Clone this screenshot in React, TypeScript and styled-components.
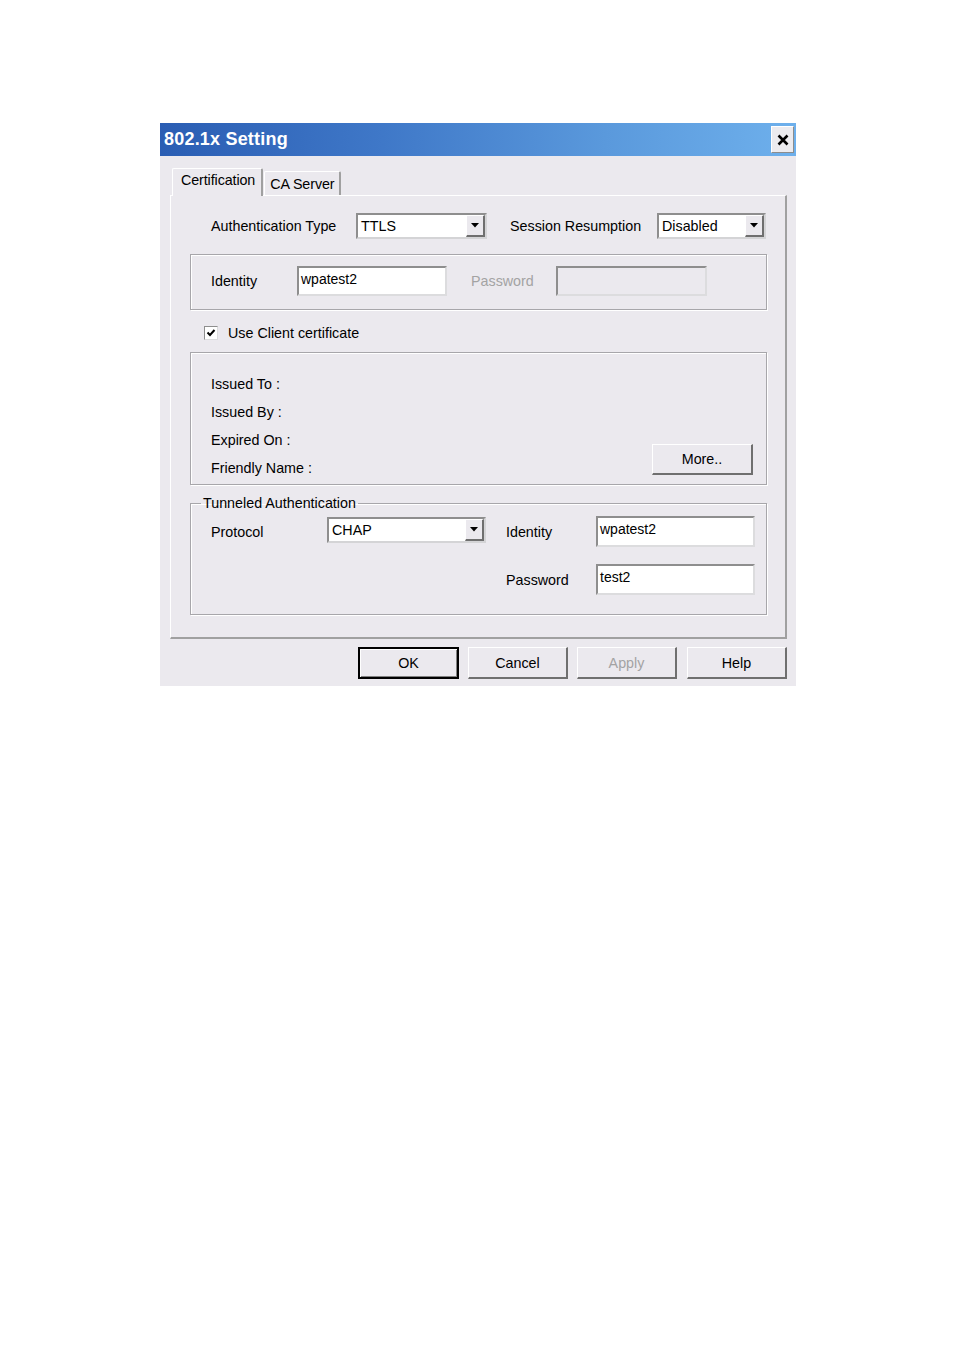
import React from 'react'
import styled, { createGlobalStyle } from 'styled-components'

const GlobalStyle = createGlobalStyle`
  body {
    margin: 0;
    background: #ffffff;
  }
`

const face = '#ebe9ee'
const shadow = '#a0a0a0'
const darkShadow = '#6f6f6f'

export default function App() {
  return (
    <Page>
      <GlobalStyle />
      <Dialog>
        <TitleBar>
          <Title>802.1x Setting</Title>
          <CloseButton>
            <svg width="12" height="12" viewBox="0 0 12 12">
              <path d="M1.5 1.5 L10.5 10.5 M10.5 1.5 L1.5 10.5" stroke="#000" strokeWidth="2.6" />
            </svg>
          </CloseButton>
        </TitleBar>

        <Body>
          <Tabs>
            <Tab $active>Certification</Tab>
            <Tab>CA Server</Tab>
          </Tabs>

          <Panel>
            <TopRow>
              <Label $width={145}>Authentication Type</Label>
              <Select $width={131} value="TTLS" />
              <Label $width={147} style={{ marginLeft: 23 }}>Session Resumption</Label>
              <Select $width={109} value="Disabled" />
            </TopRow>

            <IdentityGroup>
              <Label $width={86}>Identity</Label>
              <Field $width={150}>wpatest2</Field>
              <Label $width={85} $disabled style={{ marginLeft: 24 }}>Password</Label>
              <Field $width={151} $disabled />
            </IdentityGroup>

            <CheckRow>
              <CheckBox>
                <svg width="10" height="10" viewBox="0 0 10 10">
                  <path d="M1.5 4.5 L4 7 L8.5 2" stroke="#000" strokeWidth="2" fill="none" />
                </svg>
              </CheckBox>
              <span>Use Client certificate</span>
            </CheckRow>

            <CertGroup>
              <CertList>
                <CertLine>Issued To :</CertLine>
                <CertLine>Issued By :</CertLine>
                <CertLine>Expired On :</CertLine>
                <CertLine>Friendly Name :</CertLine>
              </CertList>
              <MoreButton>More..</MoreButton>
            </CertGroup>

            <Tunnel>
              <Legend>Tunneled Authentication</Legend>
              <TunnelGrid>
                <Label>Protocol</Label>
                <Select $width={159} value="CHAP" $offset />
                <Label $pad>Identity</Label>
                <Field $width={159} $tall>wpatest2</Field>
                <span />
                <span />
                <Label $pad>Password</Label>
                <Field $width={159} $tall>test2</Field>
              </TunnelGrid>
            </Tunnel>
          </Panel>

          <Buttons>
            <Button $default $wide>OK</Button>
            <Button>Cancel</Button>
            <Button $disabled>Apply</Button>
            <Button style={{ marginLeft: 1 }}>Help</Button>
          </Buttons>
        </Body>
      </Dialog>
    </Page>
  )
}

type SelectProps = { $width: number, value: string, $offset?: boolean }

function Select({ $width, value, $offset }: SelectProps) {
  return (
    <SelectBox $width={$width} $offset={$offset}>
      <SelectValue>{value}</SelectValue>
      <DropButton>
        <svg width="8" height="5" viewBox="0 0 8 5">
          <path d="M0 0 H8 L4 4.5 Z" fill="#000" />
        </svg>
      </DropButton>
    </SelectBox>
  )
}

const Page = styled.div`
  padding: 123px 0 0 160px;
`

const Dialog = styled.div`
  width: 636px;
  background: ${face};
  font-family: "Liberation Sans", Arial, sans-serif;
  font-size: 14.3px;
  color: #000;
`

const TitleBar = styled.div`
  height: 33px;
  display: flex;
  align-items: center;
  justify-content: space-between;
  padding: 0 2px 0 4px;
  background: linear-gradient(90deg, #2a5db3 0%, #3f78c8 35%, #5a99dc 70%, #6eb0ec 100%);
`

const Title = styled.span`
  color: #ffffff;
  font-weight: bold;
  font-size: 18px;
  letter-spacing: 0.2px;
`

const CloseButton = styled.div`
  width: 23px;
  height: 27px;
  box-sizing: border-box;
  display: flex;
  align-items: center;
  justify-content: center;
  background: #ecebef;
  border-top: 1px solid #ffffff;
  border-left: 1px solid #ffffff;
  border-right: 1px solid #8c8c8c;
  border-bottom: 1px solid #8c8c8c;
`

const Body = styled.div`
  padding: 12px 9px 7px 10px;
`

const Tabs = styled.div`
  display: flex;
  align-items: flex-end;
  height: 27px;
  padding-left: 2px;
`

const Tab = styled.div<{ $active?: boolean }>`
  box-sizing: border-box;
  height: ${p => p.$active ? '28px' : '24px'};
  margin-bottom: ${p => p.$active ? '-1px' : '0'};
  padding: ${p => p.$active ? '3px 6px 0 8px' : '4px 5px 0 5px'};
  margin-right: ${p => p.$active ? '1px' : '0'};
  background: ${face};
  border-top: 1px solid #ffffff;
  border-left: 1px solid #ffffff;
  border-right: 2px solid ${shadow};
  border-radius: 2px 2px 0 0;
  letter-spacing: -0.1px;
  position: relative;
  z-index: ${p => p.$active ? 1 : 0};
`

const Panel = styled.div`
  box-sizing: border-box;
  width: 617px;
  border-top: 1px solid #ffffff;
  border-left: 1px solid #ffffff;
  border-right: 2px solid ${shadow};
  border-bottom: 2px solid ${shadow};
  padding: 17px 18px 22px 19px;
`

const TopRow = styled.div`
  display: flex;
  align-items: center;
  height: 26px;
  padding-left: 21px;
`

const Label = styled.span<{ $width?: number, $disabled?: boolean, $pad?: boolean }>`
  display: inline-block;
  width: ${p => p.$width ? `${p.$width}px` : 'auto'};
  color: ${p => p.$disabled ? '#a3a3a3' : '#000'};
  padding-left: ${p => p.$pad ? '20px' : '0'};
  white-space: nowrap;
`

const SelectBox = styled.div<{ $width: number, $offset?: boolean }>`
  box-sizing: border-box;
  width: ${p => p.$width}px;
  height: 26px;
  display: flex;
  background: #ffffff;
  border-top: 2px solid #8e8e8e;
  border-left: 2px solid #8e8e8e;
  border-right: 2px solid #d4d4d6;
  border-bottom: 2px solid #d4d4d6;
  align-self: ${p => p.$offset ? 'start' : 'auto'};
  margin-top: ${p => p.$offset ? '1px' : '0'};
`

const SelectValue = styled.span`
  flex: 1;
  line-height: 22px;
  padding-left: 3px;
`

const DropButton = styled.div`
  box-sizing: border-box;
  width: 19px;
  height: 22px;
  display: flex;
  align-items: center;
  justify-content: center;
  background: ${face};
  border-top: 1px solid #ffffff;
  border-left: 1px solid #ffffff;
  border-right: 2px solid ${darkShadow};
  border-bottom: 2px solid ${darkShadow};
`

const etched = `
  border: 1px solid #a7a6aa;
  box-shadow: inset 1px 1px 0 #ffffff, 1px 1px 0 #ffffff;
`

const IdentityGroup = styled.div`
  box-sizing: border-box;
  height: 56px;
  margin-top: 15px;
  display: flex;
  align-items: center;
  padding: 0 0 2px 20px;
  ${etched}
`

const Field = styled.div<{ $width: number, $disabled?: boolean, $tall?: boolean }>`
  box-sizing: border-box;
  width: ${p => p.$width}px;
  height: ${p => p.$tall ? '31px' : '30px'};
  background: ${p => p.$disabled ? face : '#ffffff'};
  border-top: 2px solid #8e8e8e;
  border-left: 2px solid #8e8e8e;
  border-right: 2px solid #dcdcde;
  border-bottom: 2px solid #dcdcde;
  padding: 3px 0 0 2px;
  font-size: 14px;
`

const CheckRow = styled.div`
  display: flex;
  align-items: center;
  height: 14px;
  margin-top: 16px;
  padding-left: 14px;
  gap: 10px;
`

const CheckBox = styled.div`
  box-sizing: border-box;
  width: 14px;
  height: 14px;
  display: flex;
  align-items: center;
  justify-content: center;
  background: #ffffff;
  border-top: 1px solid #8e8e8e;
  border-left: 1px solid #8e8e8e;
  border-right: 1px solid #dcdcde;
  border-bottom: 1px solid #dcdcde;
`

const CertGroup = styled.div`
  box-sizing: border-box;
  height: 133px;
  margin-top: 12px;
  display: flex;
  justify-content: space-between;
  align-items: flex-end;
  padding: 17px 13px 9px 20px;
  ${etched}
`

const CertList = styled.div`
  display: flex;
  flex-direction: column;
  align-self: flex-start;
`

const CertLine = styled.div`
  height: 28px;
  line-height: 28px;
  white-space: nowrap;
`

const Button = styled.div<{ $default?: boolean, $disabled?: boolean, $wide?: boolean }>`
  box-sizing: border-box;
  width: ${p => p.$wide ? '101px' : '100px'};
  height: 32px;
  display: flex;
  align-items: center;
  justify-content: center;
  background: ${face};
  color: ${p => p.$disabled ? '#a3a3a3' : '#000'};
  border-top: 1px solid #ffffff;
  border-left: 1px solid #ffffff;
  border-right: 2px solid ${darkShadow};
  border-bottom: 2px solid ${darkShadow};
  ${p => p.$default ? 'border: 2px solid #000; box-shadow: inset 1px 1px 0 #fff, inset -1px -1px 0 #808080;' : ''}
`

const MoreButton = styled(Button)`
  width: 101px;
  height: 31px;
`

const Tunnel = styled.fieldset`
  margin: 8px 0 0 0;
  padding: 3px 0 19px 0;
  min-width: 0;
  ${etched}
`

const Legend = styled.legend`
  margin-left: 10px;
  padding: 0 2px;
  line-height: 20px;
`

const TunnelGrid = styled.div`
  display: grid;
  grid-template-columns: 116px 159px 110px 159px;
  grid-auto-rows: 31px;
  row-gap: 17px;
  align-items: center;
  padding-left: 20px;
`

const Buttons = styled.div`
  display: flex;
  justify-content: flex-end;
  gap: 9px;
  margin-top: 8px;
`
